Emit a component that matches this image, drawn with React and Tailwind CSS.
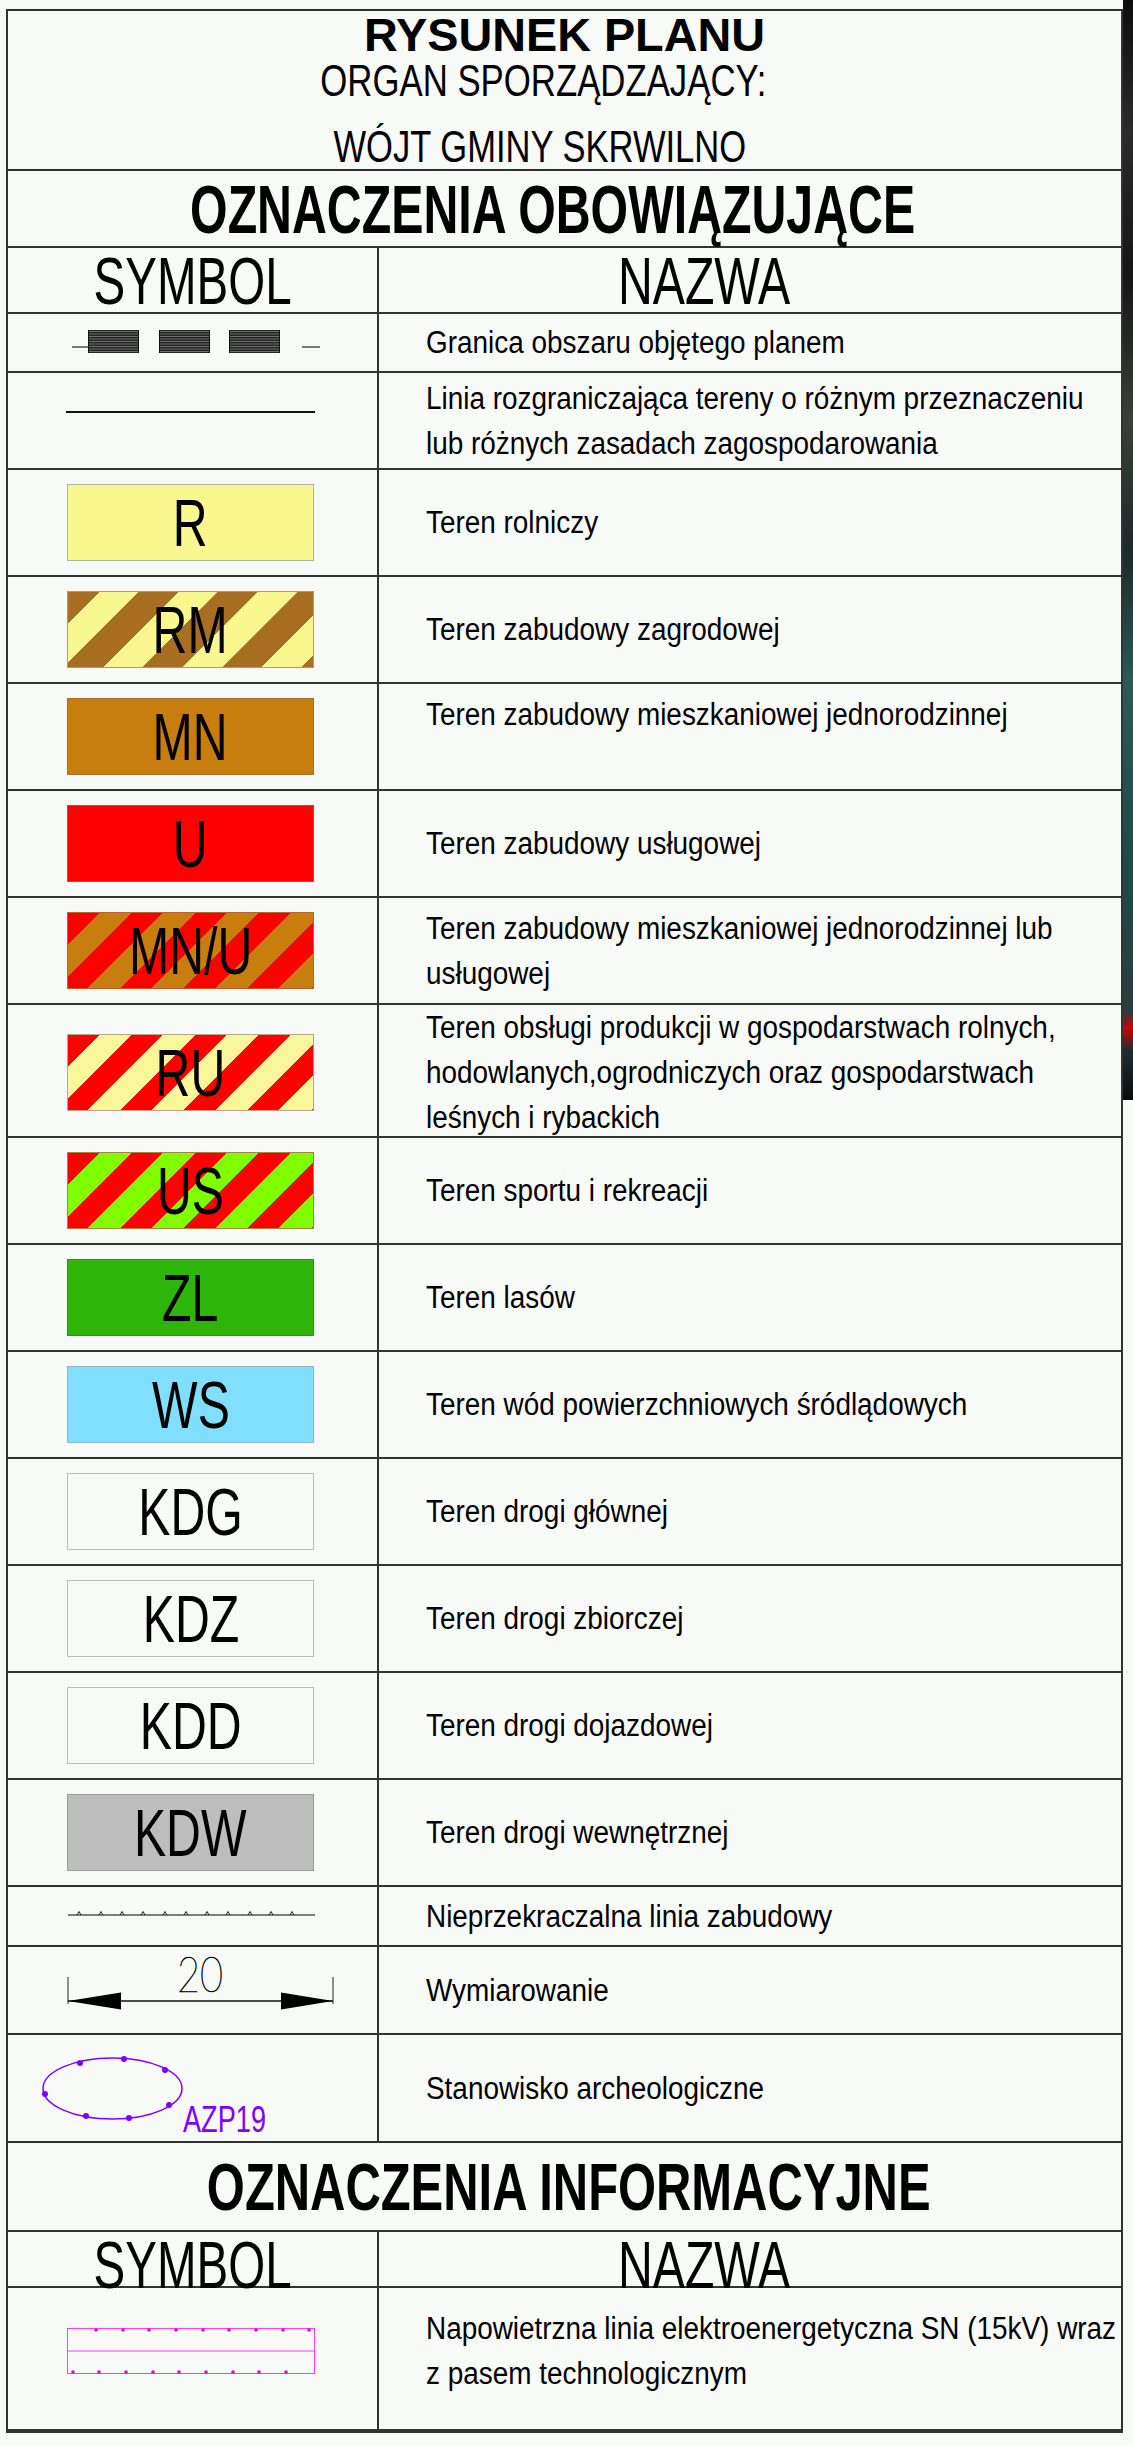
import React from "react";

const LINE = "border-[#333]";

const LabelBox = ({ box, label }) => (
  <div className={`w-[247px] h-[77px] border flex items-center justify-center ${box}`}>
    <span className="inline-block scale-x-[0.72] text-[67px] leading-none text-black">{label}</span>
  </div>
);

const Desc = ({ lines }) => (
  <div className="origin-left scale-x-[0.9] text-[31px] leading-[45px] text-black">
    {lines.map((l, i) => (
      <div key={i} className="whitespace-nowrap">{l}</div>
    ))}
  </div>
);

const Row = ({ h, symbol, lines, extra = "", symCls = "items-center" }) => (
  <div className={`grid grid-cols-[371px_minmax(0,1fr)] border-b-2 ${LINE} ${h}`}>
    <div className={`flex ${symCls} pl-[59px] border-r-2 ${LINE} ${extra}`}>{symbol}</div>
    <div className={`min-w-0 flex items-center pl-[47px] ${extra}`}>
      <Desc lines={lines} />
    </div>
  </div>
);

const GranicaSymbol = () => (
  <svg width="260" height="26" viewBox="0 0 260 26" className="-ml-[1px]">
    <line x1="6" y1="17" x2="22" y2="17" stroke="#222" strokeWidth="1.2" />
    <line x1="236" y1="17" x2="254" y2="17" stroke="#222" strokeWidth="1.2" />
    {[22, 93, 163].map((x) => (
      <g key={x}>
        <rect x={x} y="0" width="51" height="23" fill="#262626" />
        {[1.5, 4, 6.5, 9, 11.5, 14, 16.5, 19, 21.5].map((y) => (
          <line key={y} x1={x} y1={y} x2={x + 51} y2={y} stroke="#9a9a9a" strokeWidth="0.6" />
        ))}
        <line x1={x + 0.5} y1="0" x2={x + 0.5} y2="23" stroke="#111" strokeWidth="1" />
        <line x1={x + 50.5} y1="0" x2={x + 50.5} y2="23" stroke="#111" strokeWidth="1" />
      </g>
    ))}
  </svg>
);

const LiniaZabudowy = () => (
  <svg width="252" height="12" viewBox="0 0 252 12">
    <line x1="1" y1="5" x2="248" y2="5" stroke="#555" strokeWidth="1.5" />
    {[12, 34, 55, 76, 98, 119, 140, 161, 183, 204, 225].map((x) => (
      <polyline key={x} points={`${x - 2},5 ${x},1.5 ${x + 2},5`} fill="none" stroke="#222" strokeWidth="1" />
    ))}
  </svg>
);

// wymiarowanie: strzalki + liczba
const Wymiar = () => (
  <svg width="290" height="74" viewBox="0 -10 290 74" className="-ml-[7px] -mt-[26px]">
    <line x1="8" y1="27" x2="8" y2="54" stroke="#222" strokeWidth="1" />
    <line x1="273" y1="27" x2="273" y2="54" stroke="#222" strokeWidth="1" />
    <line x1="8" y1="51" x2="273" y2="51" stroke="#111" strokeWidth="1.5" />
    <polygon points="8,51 61,42.5 61,59.5" fill="#000" />
    <polygon points="273,51 221,42.5 221,59.5" fill="#000" />
    <text
      x="117"
      y="42"
      fontSize="50"
      fontFamily="Lato, 'DejaVu Sans', sans-serif"
      fontWeight="100"
      textLength="46"
      lengthAdjust="spacingAndGlyphs"
      fill="#000"
      stroke="#000"
      strokeWidth="0.6"
    >
      20
    </text>
  </svg>
);

const Stanowisko = () => (
  <svg width="290" height="92" viewBox="0 -1 290 92" className="-ml-[27px]">
    <ellipse cx="72.5" cy="38.5" rx="69.5" ry="30.5" fill="none" stroke="#7f00ff" strokeWidth="1.5" />
    {[
      [40, 13],
      [84, 9],
      [125, 20],
      [129, 55],
      [89, 68],
      [46, 66],
      [5, 44],
    ].map(([x, y]) => (
      <circle key={x} cx={x} cy={y} r="3" fill="#7f00ff" />
    ))}
    <text x="143" y="82" fontSize="36" fontFamily="'Liberation Sans', Arial, sans-serif" textLength="83" lengthAdjust="spacingAndGlyphs" fill="#8000ff">
      AZP19
    </text>
  </svg>
);

const LiniaSN = () => (
  <svg width="252" height="50" viewBox="0 0 252 50" className="-ml-[1px]">
    <rect x="1.5" y="2.5" width="247" height="45" fill="none" stroke="#ff3cff" strokeWidth="1" />
    <line x1="1.5" y1="25" x2="248.5" y2="25" stroke="#ff3cff" strokeWidth="1" />
    {[30, 57, 83, 110, 137, 163, 190, 217, 243].map((x) => (
      <circle key={`t${x}`} cx={x} cy="4" r="1.8" fill="#e000e0" />
    ))}
    {[7, 33, 60, 87, 113, 140, 167, 193, 220].map((x) => (
      <circle key={`b${x}`} cx={x} cy="46" r="1.8" fill="#e000e0" />
    ))}
  </svg>
);

const HeadRow = ({ h }) => (
  <div className={`grid grid-cols-[371px_minmax(0,1fr)] border-b-2 ${LINE} ${h}`}>
    <div className={`flex items-center justify-center border-r-2 ${LINE}`}>
      <span className="inline-block scale-x-[0.72] text-[66px] leading-none">SYMBOL</span>
    </div>
    <div className="min-w-0 flex items-center pl-[239px]">
      <span className="inline-block origin-left scale-x-[0.73] text-[66px] leading-none">NAZWA</span>
    </div>
  </div>
);

export default function App() {
  return (
    <div className="min-h-[2446px] bg-[#f8faf8] flex items-start font-['Liberation_Sans',Arial,sans-serif] text-black">
      <div className={`ml-[6px] mt-[9px] w-[1117px] border-2 ${LINE}`}>
        {/* naglowek */}
        <div className={`h-[160px] border-b-2 ${LINE} flex flex-col items-center`}>
          <div className="h-[47px] flex items-center">
            <span className="inline-block scale-x-[0.995] text-[47px] leading-[46px] font-bold">RYSUNEK PLANU</span>
          </div>
          <div className="h-[45px] flex items-center pr-[42px]">
            <span className="inline-block scale-x-[0.79] text-[44px] leading-[44px]">ORGAN SPORZĄDZAJĄCY:</span>
          </div>
          <div className="mt-[24px] h-[40px] flex items-center pr-[50px]">
            <span className="inline-block scale-x-[0.785] text-[44px] leading-[40px]">WÓJT GMINY SKRWILNO</span>
          </div>
        </div>

        <div className={`h-[77px] border-b-2 ${LINE} flex items-center justify-center pr-[24px]`}>
          <span className="inline-block scale-x-[0.71] text-[68px] leading-none font-bold">OZNACZENIA OBOWIĄZUJĄCE</span>
        </div>

        <HeadRow h="h-[66px]" />

        <Row h="h-[59px]" symbol={<GranicaSymbol />} lines={["Granica obszaru objętego planem"]} />
        <div className={`grid grid-cols-[371px_minmax(0,1fr)] border-b-2 ${LINE} h-[97px]`}>
          <div className={`pl-[58px] pt-[38px] border-r-2 ${LINE}`}>
            <div className="w-[249px] h-[2px] bg-[#111]" />
          </div>
          <div className="min-w-0 flex items-center pl-[47px]">
            <Desc lines={["Linia rozgraniczająca tereny o różnym przeznaczeniu", "lub różnych zasadach zagospodarowania"]} />
          </div>
        </div>

        <Row h="h-[107px]" symbol={<LabelBox box="bg-[#f8f88e] border-[#b4b49c]" label="R" />} lines={["Teren rolniczy"]} />
        <Row
          h="h-[107px]"
          symbol={<LabelBox box="bg-[repeating-linear-gradient(135deg,#a86f22_0px,#a86f22_22px,#f8f88e_22px,#f8f88e_50px,#a86f22_50px,#a86f22_56px)] border-[#b09a70]" label="RM" />}
          lines={["Teren zabudowy zagrodowej"]}
        />
        <Row
          h="h-[107px]"
          symbol={<LabelBox box="bg-[#c87d0f] border-[#a87030]" label="MN" />}
          lines={["Teren zabudowy mieszkaniowej jednorodzinnej", "\u00a0"]}
        />
        <Row h="h-[107px]" symbol={<LabelBox box="bg-[#ff0000] border-[#d04040]" label="U" />} lines={["Teren zabudowy usługowej"]} />
        <Row
          h="h-[107px]"
          symbol={<LabelBox box="bg-[repeating-linear-gradient(135deg,#ff0000_0px,#ff0000_22px,#c87d0f_22px,#c87d0f_45px)] border-[#c06030]" label="MN/U" />}
          lines={["Teren zabudowy mieszkaniowej jednorodzinnej lub", "usługowej"]}
        />
        <Row
          h="h-[133px]"
          symbol={<LabelBox box="bg-[repeating-linear-gradient(135deg,#ff0000_0px,#ff0000_22px,#f8f89a_22px,#f8f89a_45px)] border-[#c0a090]" label="RU" />}
          lines={[
            "Teren obsługi produkcji w gospodarstwach rolnych,",
            "hodowlanych,ogrodniczych oraz gospodarstwach",
            "leśnych i rybackich",
          ]}
        />
        <Row
          h="h-[107px]"
          symbol={<LabelBox box="bg-[repeating-linear-gradient(135deg,#ff0000_0px,#ff0000_22px,#80ff00_22px,#80ff00_45px)] border-[#b08040]" label="US" />}
          lines={["Teren sportu i rekreacji"]}
        />
        <Row h="h-[107px]" symbol={<LabelBox box="bg-[#2db50a] border-[#3a8a30]" label="ZL" />} lines={["Teren lasów"]} />
        <Row h="h-[107px]" symbol={<LabelBox box="bg-[#80dfff] border-[#8ab8c8]" label="WS" />} lines={["Teren wód powierzchniowych śródlądowych"]} />
        <Row h="h-[107px]" symbol={<LabelBox box="bg-[#f8faf8] border-[#bdbdbd]" label="KDG" />} lines={["Teren drogi głównej"]} />
        <Row h="h-[107px]" symbol={<LabelBox box="bg-[#f8faf8] border-[#bdbdbd]" label="KDZ" />} lines={["Teren drogi zbiorczej"]} />
        <Row h="h-[107px]" symbol={<LabelBox box="bg-[#f8faf8] border-[#bdbdbd]" label="KDD" />} lines={["Teren drogi dojazdowej"]} />
        <Row h="h-[107px]" symbol={<LabelBox box="bg-[#bdbdbd] border-[#9a9a9a]" label="KDW" />} lines={["Teren drogi wewnętrznej"]} />
        <Row h="h-[60px]" symbol={<LiniaZabudowy />} lines={["Nieprzekraczalna linia zabudowy"]} />
        <Row h="h-[88px]" symbol={<Wymiar />} lines={["Wymiarowanie"]} />
        <Row h="h-[108px]" symCls="items-start pt-[14px]" symbol={<Stanowisko />} lines={["Stanowisko archeologiczne"]} />

        <div className={`h-[89px] border-b-2 ${LINE} flex items-center justify-center pl-[8px]`}>
          <span className="inline-block scale-x-[0.73] text-[67px] leading-none font-bold">OZNACZENIA INFORMACYJNE</span>
        </div>

        <HeadRow h="h-[56px]" />

        <Row
          h="h-[143px]"
          extra="pb-[15px]"
          symbol={<LiniaSN />}
          lines={["Napowietrzna linia elektroenergetyczna SN (15kV) wraz", "z pasem technologicznym"]}
        />
      </div>

      {/* fragment mapy przy prawej krawedzi */}
      <div className="w-[10px] h-[1100px] bg-[linear-gradient(to_bottom,#0d0d0d_0%,#2b2b2b_12%,#151515_25%,#3a3f3a_38%,#1c2a28_50%,#2a5a58_62%,#1f4a4a_78%,#2b3b3b_92%,#d00000_93.5%,#1a2e2e_95.5%,#0d0d0d_100%)]" />
    </div>
  );
}
